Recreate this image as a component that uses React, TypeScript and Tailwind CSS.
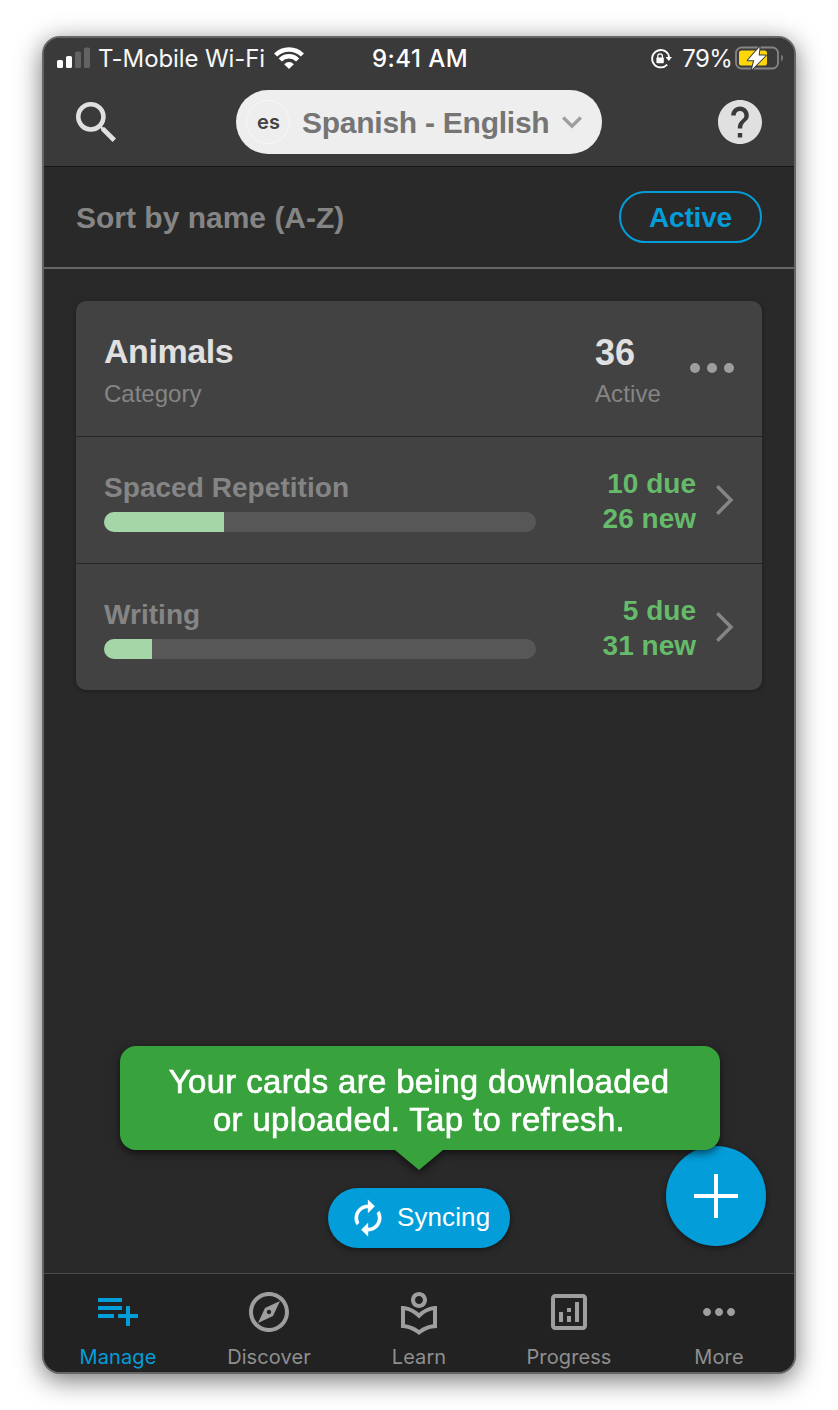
import type { ReactNode } from 'react';
import {
  MdMoreHoriz,
  MdOutlineAnalytics,
  MdOutlineExplore,
  MdOutlineLocalLibrary,
} from 'react-icons/md';

function StatusBar() {
  return (
    <div className="flex h-10 items-center pr-[10px] pl-[13px] font-['Inter',sans-serif] text-2xl leading-10 text-[#f7f7f7]">
      <div className="flex flex-1 items-center">
        <svg width="34" height="22" viewBox="0 0 34 22" className="mb-px shrink-0">
          <rect x="0" y="13" width="6" height="8" rx="1.6" fill="#fff" />
          <rect x="9" y="9" width="6" height="12" rx="1.6" fill="#fff" />
          <rect x="18" y="4.5" width="6" height="16.5" rx="1.6" fill="#626262" />
          <rect x="27" y="0.5" width="6" height="20.5" rx="1.6" fill="#626262" />
        </svg>
        <span className="mt-[2px] ml-[7px] tracking-[-0.1px] whitespace-nowrap">T-Mobile Wi-Fi</span>
        <svg width="30" height="22" viewBox="0 0 30 22" className="mb-px ml-[9px] shrink-0" fill="none" stroke="#fff" strokeWidth="4.4">
          <path d="M1.6 8A19 19 0 0 1 28.4 8" />
          <path d="M6.3 13A12 12 0 0 1 23.7 13" />
          <path d="M15 22L10.2 17.2A6.5 6.5 0 0 1 19.8 17.2Z" fill="#fff" stroke="none" />
        </svg>
      </div>
      <div className="mt-[2px] mr-px font-medium tracking-[0.45px] whitespace-nowrap text-white">9:41 AM</div>
      <div className="flex flex-1 items-center justify-end">
        <svg width="22" height="22" viewBox="0 0 22 22" className="mt-px mr-[10px]">
          <path d="M18.2 6.1A8.7 8.7 0 1 0 17.2 16.6" fill="none" stroke="#fff" strokeWidth="1.8" />
          <path d="M18.2 6.1A8.7 8.7 0 0 1 19 9.4" fill="none" stroke="#fff" strokeWidth="1.8" />
          <path d="M15.6 8.9H22L18.8 12.9Z" fill="#fff" />
          <rect x="6.4" y="9.5" width="7.4" height="5.7" rx="0.8" fill="#fff" />
          <path d="M7.8 10V8.1a2.3 2.3 0 0 1 4.6 0V10" fill="none" stroke="#fff" strokeWidth="1.3" />
        </svg>
        <span className="mt-[2px] tracking-[-0.7px]">79%</span>
        <svg width="49" height="24" viewBox="0 0 49 24" className="mb-px ml-[3px] shrink-0">
          <rect x="1" y="1.5" width="42" height="21" rx="5.6" fill="none" stroke="#858585" strokeWidth="1.8" />
          <path d="M46.2 8.5q1.7 1 1.7 3.5t-1.7 3.5z" fill="#858585" />
          <rect x="4" y="4.5" width="28" height="15" rx="2.6" fill="#ffd60a" />
          <path
            d="M24.6 1L12.8 14.3h6.4L16.9 23.5 30.7 9.4h-7z"
            fill="#fff"
            stroke="#3a3a3a"
            strokeWidth="2"
            strokeLinejoin="round"
            paintOrder="stroke"
          />
        </svg>
      </div>
    </div>
  );
}

function Header() {
  return (
    <div className="flex h-[88px] items-center justify-between px-8">
      <svg width="44" height="40" viewBox="3 3 19.24 17.49" fill="#e0e0e0">
        <path d="M15.5 14h-.79l-.28-.27A6.471 6.471 0 0 0 16 9.5 6.5 6.5 0 1 0 9.5 16c1.61 0 3.09-.59 4.23-1.57l.27.28v.79l5 4.99L20.49 19l-4.99-5zm-6 0C7.01 14 5 11.99 5 9.5S7.01 5 9.5 5 14 7.01 14 9.5 11.99 14 9.5 14z" />
      </svg>
      <button className="flex h-16 w-[366px] items-center rounded-full bg-[#eeeeee] pl-[10px]">
        <span className="flex size-11 items-center justify-center rounded-full border border-[#f7f7f7] pl-px font-['Inter',sans-serif] text-[20px] font-semibold text-[#424242]">
          es
        </span>
        <span className="ml-[12px] text-[30px] font-bold tracking-[-0.25px] whitespace-nowrap text-[#757575]">
          Spanish - English
        </span>
        <svg width="20" height="13" viewBox="0 0 20 13" className="ml-[13px]" fill="none" stroke="#9e9e9e" strokeWidth="3.4">
          <path d="M1.2 1.5L10 10.2 18.8 1.5" />
        </svg>
      </button>
      <svg width="44" height="44" viewBox="2 2 20 20" fill="#e0e0e0">
        <path d="M12 2C6.48 2 2 6.48 2 12s4.48 10 10 10 10-4.48 10-10S17.52 2 12 2zm1 17h-2v-2h2v2zm2.07-7.75l-.9.92C13.45 12.9 13 13.5 13 15h-2v-.5c0-1.1.45-2.1 1.17-2.83l1.24-1.26c.37-.36.59-.86.59-1.41 0-1.1-.9-2-2-2s-2 .9-2 2H8c0-2.21 1.79-4 4-4s4 1.79 4 4c0 .88-.36 1.68-.93 2.25z" />
      </svg>
    </div>
  );
}

type Deck = { title: string; progress: number; due: number; fresh: number };

const decks: Deck[] = [
  { title: 'Spaced Repetition', progress: 120, due: 10, fresh: 26 },
  { title: 'Writing', progress: 48, due: 5, fresh: 31 },
];

function DeckRow({ deck }: { deck: Deck }) {
  return (
    <div className="flex h-[127px] items-start border-t border-[#252525] pr-7 pl-7">
      <div className="w-[432px] pt-[33px]">
        <div className="text-[28px] leading-9 font-bold tracking-[0.05px] text-[#858585]">{deck.title}</div>
        <div className="mt-[6px] h-5 overflow-hidden rounded-full bg-[#575757]">
          <div className="h-full bg-[#a5d6a7]" style={{ width: deck.progress }} />
        </div>
      </div>
      <div className="flex-1 pt-[29px] text-right text-[28px] leading-[35px] font-bold text-[#66bb6a]">
        <div>{deck.due} due</div>
        <div>{deck.fresh} new</div>
      </div>
      <svg width="18" height="30" viewBox="0 0 18 30" className="mt-12 ml-5" fill="none" stroke="#858585" strokeWidth="3.5">
        <path d="M1.3 1.3L15 15 1.3 28.7" />
      </svg>
    </div>
  );
}

function CategoryCard() {
  return (
    <div className="mx-8 mt-8 h-[389px] overflow-hidden rounded-[10px] bg-[#424242] shadow-[0_1px_4px_rgba(0,0,0,0.35)]">
      <div className="flex h-[135px] px-7">
        <div className="flex-1 pt-[30px]">
          <div className="text-[34px] leading-10 font-bold tracking-[-0.45px] text-[#e0e0e0]">Animals</div>
          <div className="mt-2 text-2xl leading-[30px] text-[#858585]">Category</div>
        </div>
        <div className="w-[95px] pt-8">
          <div className="text-4xl leading-10 font-bold text-[#e0e0e0]">36</div>
          <div className="mt-[6px] text-2xl leading-[30px] tracking-[0.1px] text-[#858585]">Active</div>
        </div>
        <div className="flex gap-[7px] pt-[62px]">
          <span className="size-[10px] rounded-full bg-[#9e9e9e]" />
          <span className="size-[10px] rounded-full bg-[#9e9e9e]" />
          <span className="size-[10px] rounded-full bg-[#9e9e9e]" />
        </div>
      </div>
      {decks.map((deck) => (
        <DeckRow key={deck.title} deck={deck} />
      ))}
    </div>
  );
}

function NavItem({ icon, label, active = false }: { icon: ReactNode; label: string; active?: boolean }) {
  return (
    <div className={active ? 'flex flex-col items-center text-[#039dd9]' : 'flex flex-col items-center text-[#9e9e9e]'}>
      <div className="flex h-[69px] items-start">{icon}</div>
      <span className={active ? 'leading-7 tracking-[0.1px]' : 'leading-7 tracking-[0.1px] text-[#8f8f8f]'}>{label}</span>
    </div>
  );
}

export default function App() {
  return (
    <div className="h-[1410px] w-[838px] overflow-hidden bg-white px-[42px] pt-9 font-['Liberation_Sans',Arial,sans-serif]">
      <div className="flex h-[1338px] flex-col overflow-hidden rounded-[18px] border-2 border-[#666666] bg-[#292929] shadow-[0_6px_26px_rgba(0,0,0,0.55)]">
        <header className="border-b border-[#161616] bg-[#3a3a3a]">
          <StatusBar />
          <Header />
        </header>
        <div className="flex h-[102px] items-center justify-between border-b-2 border-[#666666] px-8">
          <span className="text-[30px] font-bold text-[#858585]">Sort by name (A-Z)</span>
          <button className="h-[52px] w-[143px] rounded-full border-2 border-[#039dd9] pt-[2px] text-[28px] font-bold tracking-[-0.2px] text-[#039dd9]">
            Active
          </button>
        </div>
        <main className="relative flex-1">
          <div className="-mt-px pt-px">
            <CategoryCard />
          </div>
          <button className="absolute right-7 bottom-[27px] flex size-[100px] items-center justify-center rounded-full bg-[#039dd9] shadow-[0_2px_6px_rgba(0,0,0,0.45)]">
            <svg width="44" height="44" viewBox="0 0 44 44" stroke="#fff" strokeWidth="4">
              <path d="M22 0V44M0 22H44" />
            </svg>
          </button>
          <button className="absolute bottom-[25px] left-[284px] flex h-[60px] w-[182px] items-center rounded-full bg-[#039dd9] pl-5 text-[26px] text-white shadow-[0_2px_6px_rgba(0,0,0,0.45)]">
            <svg width="40" height="40" viewBox="0 0 24 24" fill="currentColor" stroke="currentColor" strokeWidth="0.2">
              <path d="M12 6v3l4-4-4-4v3c-4.42 0-8 3.58-8 8 0 1.57.46 3.03 1.24 4.26L6.7 14.8c-.45-.83-.7-1.79-.7-2.8 0-3.31 2.69-6 6-6zm6.76 1.74L17.3 9.2c.44.84.7 1.79.7 2.8 0 3.31-2.69 6-6 6v-3l-4 4 4 4v-3c4.42 0 8-3.58 8-8 0-1.57-.46-3.03-1.24-4.26z" />
            </svg>
            <span className="mb-[2px] ml-[9px] tracking-[0.1px]">Syncing</span>
          </button>
          <div className="absolute bottom-[103px] left-[76px] flex w-[600px] flex-col items-center drop-shadow-[0_3px_4px_rgba(0,0,0,0.6)]">
            <div className="h-[104px] w-full rounded-2xl bg-[#38a33c] pt-[17px] pr-[2px] text-center text-[33px] leading-[38px] tracking-[0.33px] text-white [-webkit-text-stroke:0.6px_white]">
              Your cards are being downloaded
              <br />
              or uploaded. Tap to refresh.
            </div>
            <svg width="48" height="20" viewBox="0 0 48 20" className="mr-[2px]" fill="#38a33c">
              <path d="M0 0H48L24 20Z" />
            </svg>
          </div>
        </main>
        <nav className="grid h-[99px] grid-cols-[148px_154px_146px_154px_146px] border-t border-[#4b4b4b] bg-[#222222] font-['Inter',sans-serif] text-xl">
          <NavItem
            active
            label="Manage"
            icon={
              <svg width="48" height="48" viewBox="0 0 24 24" className="mt-3" fill="currentColor">
                <path d="M14 10H2v2h12v-2zm0-4H2v2h12V6zm4 8v-4h-2v4h-4v2h4v4h2v-4h4v-2h-4zM2 16h8v-2H2v2z" />
              </svg>
            }
          />
          <NavItem label="Discover" icon={<MdOutlineExplore size={48} className="mt-[14px]" />} />
          <NavItem label="Learn" icon={<MdOutlineLocalLibrary size={48} className="mt-4" />} />
          <NavItem label="Progress" icon={<MdOutlineAnalytics size={48} className="mt-[14px]" />} />
          <NavItem label="More" icon={<MdMoreHoriz size={48} className="mt-[14px]" />} />
        </nav>
      </div>
    </div>
  );
}
